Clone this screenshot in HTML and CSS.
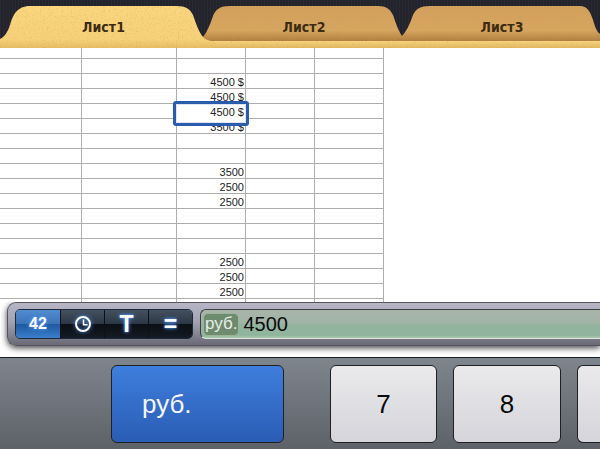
FILE: index.html
```html
<!DOCTYPE html>
<html lang="ru">
<head>
    <meta charset="UTF-8">
    <meta name="viewport" content="width=device-width, initial-scale=1.0">
    <title>Лист1</title>
    <link rel="stylesheet" href="styles.css">
</head>
<body>
    <div class="tabs">
        <svg class="tabs-art" width="600" height="48" viewBox="0 0 600 48">
            <defs>
                <linearGradient id="tabOff" x1="0" y1="0" x2="0" y2="1">
                    <stop offset="0" stop-color="#d2a05c"/>
                    <stop offset="0.7" stop-color="#d6a55e"/>
                    <stop offset="1" stop-color="#b07f3f"/>
                </linearGradient>
                <linearGradient id="tabOn" x1="0" y1="0" x2="0" y2="1">
                    <stop offset="0" stop-color="#fad67e"/>
                    <stop offset="0.8" stop-color="#f6d078"/>
                    <stop offset="1" stop-color="#e6bc62"/>
                </linearGradient>
                <linearGradient id="strip" x1="0" y1="0" x2="0" y2="1">
                    <stop offset="0" stop-color="#f8d47c"/>
                    <stop offset="1" stop-color="#e2b660"/>
                </linearGradient>
                <filter id="speckle" x="0" y="0" width="100%" height="100%">
                    <feTurbulence type="fractalNoise" baseFrequency="0.55" numOctaves="2" seed="4"/>
                    <feColorMatrix values="0 0 0 0 0.55  0 0 0 0 0.36  0 0 0 0 0.12  0 0 0 1.1 -0.6"/>
                    <feComposite in2="SourceGraphic" operator="in"/>
                </filter>
            </defs>
            <path d="M203 37 C207 32 210 25 213 16 C216 9 220 6 230 6 L378 6 C386 6 390 9 393 15 C396 24 399 32 402 36 L404 41 L200 41 Z" fill="url(#tabOff)"/>
            <path d="M402 36 C406 32 410 24 413 15 C416 9 420 6 430 6 L580 6 C587 6 590 11 593 20 C595 27 597 32 600 34 L600 41 L402 41 Z" fill="url(#tabOff)"/>
            <rect x="0" y="41" width="600" height="7" fill="url(#strip)"/>
            <path d="M0 39 C5 37 8 31 10 25 C13 15 17 6 30 6 L176 6 C186 6 190 9 193 15 C196 24 199 32 203 37 C205 39 208 41 214 41 L214 48 L0 48 Z" fill="url(#tabOn)"/>
            <path d="M0 39 C5 37 8 31 10 25 C13 15 17 6 30 6 L176 6 C186 6 190 9 193 15 C196 24 199 32 203 37 C205 39 208 41 214 41 L600 41 L600 48 L0 48 Z M203 37 C207 32 210 25 213 16 C216 9 220 6 230 6 L378 6 C386 6 390 9 393 15 C396 24 399 32 402 36 L402 41 L203 41 Z M402 36 C406 32 410 24 413 15 C416 9 420 6 430 6 L580 6 C587 6 590 11 593 20 C595 27 597 32 600 34 L600 41 L402 41 Z" fill="#000" filter="url(#speckle)"/>
        </svg>
        <div class="tab tab-first">Лист1</div>
        <div class="tab tab-second">Лист2</div>
        <div class="tab tab-third">Лист3</div>
    </div>

    <div class="sheet">
        <div class="grid">
            <div class="row"><i></i><i></i><i></i><i></i><i></i></div>
            <div class="row"><i></i><i></i><i></i><i></i><i></i></div>
            <div class="row"><i></i><i></i><i>4500 $</i><i></i><i></i></div>
            <div class="row"><i></i><i></i><i>4500 $</i><i></i><i></i></div>
            <div class="row"><i></i><i></i><i class="selected">4500 $</i><i></i><i></i></div>
            <div class="row"><i></i><i></i><i>3500 $</i><i></i><i></i></div>
            <div class="row"><i></i><i></i><i></i><i></i><i></i></div>
            <div class="row"><i></i><i></i><i></i><i></i><i></i></div>
            <div class="row"><i></i><i></i><i>3500</i><i></i><i></i></div>
            <div class="row"><i></i><i></i><i>2500</i><i></i><i></i></div>
            <div class="row"><i></i><i></i><i>2500</i><i></i><i></i></div>
            <div class="row"><i></i><i></i><i></i><i></i><i></i></div>
            <div class="row"><i></i><i></i><i></i><i></i><i></i></div>
            <div class="row"><i></i><i></i><i></i><i></i><i></i></div>
            <div class="row"><i></i><i></i><i>2500</i><i></i><i></i></div>
            <div class="row"><i></i><i></i><i>2500</i><i></i><i></i></div>
            <div class="row"><i></i><i></i><i>2500</i><i></i><i></i></div>
            <div class="row"><i></i><i></i><i></i><i></i><i></i></div>
        </div>
    </div>

    <div class="formula-wrap">
        <div class="formula">
            <div class="modes">
                <div class="mode mode-on">42</div>
                <div class="mode">
                    <svg width="20" height="20" viewBox="0 0 20 20">
                        <circle cx="10" cy="10" r="7" fill="none" stroke="#fff" stroke-width="2"/>
                        <path d="M10.5 5.5 V10.8 H14.6" fill="none" stroke="#fff" stroke-width="1.5"/>
                    </svg>
                </div>
                <div class="mode mode-big">T</div>
                <div class="mode mode-big">=</div>
            </div>
            <div class="field">
                <span class="unit">руб.</span>
                <span class="value">4500</span>
            </div>
        </div>
    </div>

    <div class="keyboard">
        <div class="key key-blue">руб.</div>
        <div class="key key-seven">7</div>
        <div class="key">8</div>
        <div class="key"></div>
    </div>
</body>
</html>
```

FILE: styles.css
```css
html, body {
    margin: 0;
    height: 449px;
    overflow: hidden;
    background-color: #fff;
    font-family: "Liberation Sans", Arial, sans-serif;
}
.tabs {
    position: relative;
    display: flex;
    height: 48px;
    background-color: #23242b;
    background-image: repeating-linear-gradient(90deg, rgba(255, 255, 255, 0.03) 0 1px, transparent 1px 3px);
}
.tabs-art {
    position: absolute;
    left: 0;
    top: 0;
}
.tab {
    position: relative;
    height: 40px;
    padding-top: 19px;
    box-sizing: border-box;
    text-align: center;
    font-family: "DejaVu Sans Condensed", "DejaVu Sans", sans-serif;
    font-weight: bold;
    font-size: 14px;
    line-height: 16px;
    color: #3d2c12;
}
.tab-first {
    width: 207px;
}
.tab-second {
    width: 194px;
}
.tab-third {
    width: 199px;
    padding-left: 3px;
}

.sheet {
    height: 254px;
    overflow: hidden;
}
.grid {
    width: 384px;
    margin-top: -4px;
}
.row {
    display: grid;
    grid-template-columns: 82px 95px 69px 69px 69px;
    height: 15px;
    box-sizing: border-box;
    border-bottom: 1px solid #aeaeae;
}
.row i {
    position: relative;
    border-right: 1px solid #aeaeae;
    padding-right: 1px;
    text-align: right;
    font-style: normal;
    font-size: 11px;
    line-height: 17px;
    color: #222;
    white-space: nowrap;
}
.row .selected {
    z-index: 1;
}
.row .selected::before {
    content: "";
    position: absolute;
    z-index: -1;
    left: -4px;
    right: -4px;
    top: -3px;
    bottom: -5px;
    border: 3px solid #2a5cae;
    border-radius: 3px;
    background-color: #fff;
    box-shadow: inset 0 0 0 1px #dfe6f2;
}

.formula-wrap {
    height: 55px;
    overflow: hidden;
    padding-left: 7px;
    background-color: #fff;
}
.formula {
    display: flex;
    align-items: flex-start;
    gap: 7px;
    width: 593px;
    height: 44px;
    box-sizing: border-box;
    padding: 6px 0 0 7px;
    border: 1px solid #55555f;
    border-right: none;
    border-radius: 9px 0 0 9px;
    background: linear-gradient(#b6b6c6, #a2a2b2 45%, #6a6a76);
    box-shadow: 0 2px 6px rgba(0, 0, 0, 0.75);
}
.modes {
    display: flex;
    flex: none;
    height: 30px;
    box-sizing: border-box;
    border: 1px solid #1d2a3d;
    border-radius: 5px;
    overflow: hidden;
}
.mode {
    display: flex;
    justify-content: center;
    align-items: center;
    width: 44px;
    box-sizing: border-box;
    border-left: 1px solid #0c1118;
    background: linear-gradient(#44505e, #2c3845 48%, #0b0f15 52%, #141b24);
    color: #fff;
    font-weight: bold;
    text-shadow: 0 0 4px #4f94ff, 0 0 2px #4f94ff;
}
.mode svg {
    filter: drop-shadow(0 0 2px #4f94ff);
}
.mode-on {
    border-left: none;
    background: linear-gradient(#528cd0, #3d74b8 48%, #1f5aa0 52%, #3b7fcc);
    font-size: 16px;
}
.mode-big {
    font-size: 23px;
    line-height: 30px;
}
.field {
    display: flex;
    align-items: center;
    gap: 4px;
    flex: 1;
    height: 30px;
    box-sizing: border-box;
    padding-left: 2px;
    border: 1px solid #3c3f40;
    border-right: none;
    border-bottom-color: #dfe6df;
    border-radius: 6px 0 0 6px;
    background: linear-gradient(#a9b4ab, #a0b4a6 48%, #93b49f 52%, #8fb49c 90%, #a9c8b3);
}
.unit {
    padding: 0 1px 1px;
    border: 1px solid #9cb498;
    border-radius: 5px;
    background-color: #6f8b6f;
    font-size: 17px;
    line-height: 20px;
    color: #e8eee8;
}
.value {
    font-size: 20px;
    color: #0b0b0b;
}

.keyboard {
    display: flex;
    gap: 16px;
    height: 92px;
    box-sizing: border-box;
    padding: 7px 0 0 111px;
    border-top: 1px solid #1b1c20;
    background: linear-gradient(#7f858d, #5d6269);
    overflow: hidden;
}
.key {
    display: flex;
    justify-content: center;
    align-items: center;
    flex: none;
    width: 108px;
    height: 78px;
    box-sizing: border-box;
    border: 1px solid #1f2024;
    border-radius: 6px;
    background: linear-gradient(#eaeaec, #d4d4da);
    font-size: 26px;
    color: #0a0a0a;
}
.key:last-child {
    width: 23px;
    border-right: none;
    border-radius: 6px 0 0 6px;
}
.key-seven {
    width: 107px;
}
.key-blue {
    justify-content: flex-start;
    width: 173px;
    margin-right: 30px;
    padding-left: 30px;
    background: linear-gradient(#3f7edd, #2a5db5);
    color: #f4f6fb;
}
```
